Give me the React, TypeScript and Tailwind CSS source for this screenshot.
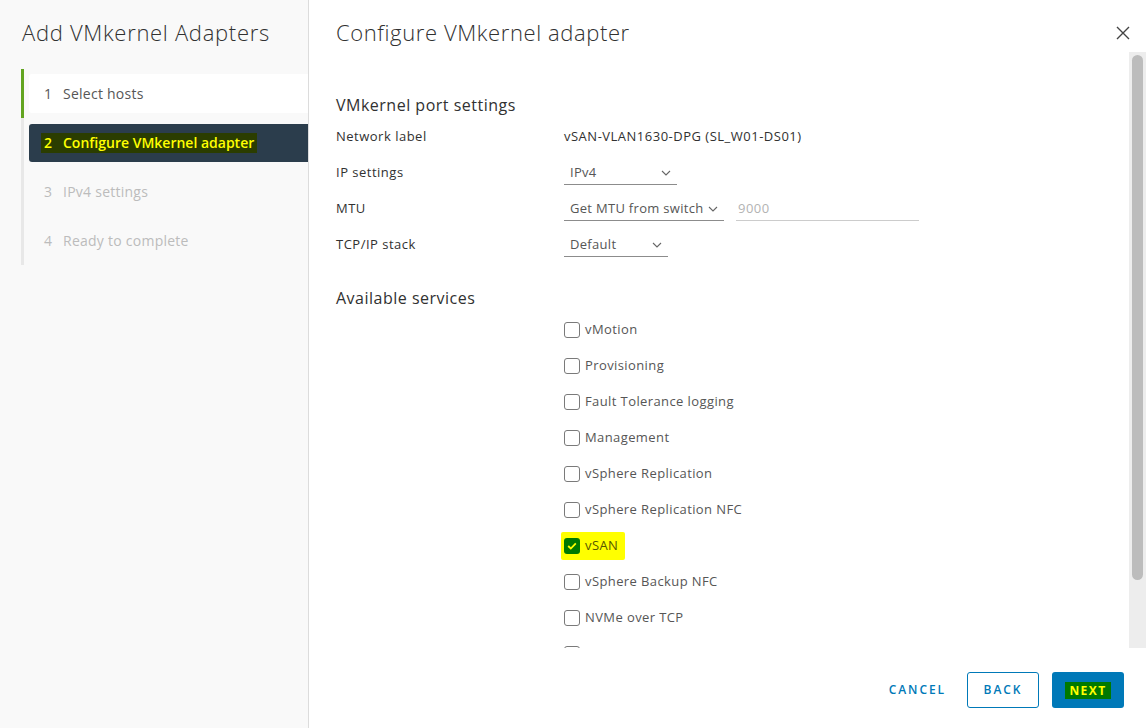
import React from "react";

const Chevron = () => (
  <svg width="10" height="6" viewBox="0 0 10 6" className="shrink-0">
    <path d="M1 1 L5 5 L9 1" fill="none" stroke="#666" strokeWidth="1.1" />
  </svg>
);

const Select = ({ value, width }: { value: string; width: string }) => (
  <div className={`${width} h-[24px] flex items-center justify-between gap-[4px] pl-[6px] pr-[6px] border-b border-[#8c8c8c] text-[13px] text-[#565656] tracking-[0.3px]`}>
    <span className="whitespace-nowrap">{value}</span>
    <Chevron />
  </div>
);

const services = [
  "vMotion",
  "Provisioning",
  "Fault Tolerance logging",
  "Management",
  "vSphere Replication",
  "vSphere Replication NFC",
  "vSAN",
  "vSphere Backup NFC",
  "NVMe over TCP",
  "",
];

export default function App() {
  return (
    <div
      className="w-[1148px] h-[728px] flex bg-white overflow-hidden"
      style={{ fontFamily: '"Open Sans", "Liberation Sans", sans-serif' }}
    >
      {/* Left panel */}
      <div className="w-[309px] shrink-0 bg-[#f9f9f9] border-r border-[#dcdcdc] flex flex-col">
        <div className="pl-[22px] pt-[17px] text-[22px] leading-[30px] font-light text-[#313131] tracking-[0.7px]">
          Add VMkernel Adapters
        </div>
        <div className="mt-[22px] ml-[21px] flex">
          <div className="w-[3px] flex flex-col">
            <div className="h-[49px] bg-[#62a420]" />
            <div className="h-[147px] bg-[#e8e8e8]" />
          </div>
          <div className="flex-1 flex flex-col pl-[5px] pt-[5px] tracking-[0.25px]">
            <div className="h-[39px] bg-white rounded-l-[3px] flex items-center pl-[15px] text-[14px] text-[#565656]">
              <span className="w-[19px]">1</span>
              <span>Select hosts</span>
            </div>
            <div className="mt-[11px] h-[38px] bg-[#2b3d4c] rounded-l-[3px] flex items-center pl-[12px]">
              <span className="bg-[#2b3d00] text-[#ffff00] font-semibold text-[14px] leading-[20px] px-[3px] tracking-normal">
                <span className="inline-block w-[19px]">2</span>Configure VMkernel adapter
              </span>
            </div>
            <div className="mt-[10px] h-[38px] flex items-center pl-[15px] text-[14px] text-[#bcbcbc]">
              <span className="w-[19px]">3</span>
              <span>IPv4 settings</span>
            </div>
            <div className="mt-[11px] h-[38px] flex items-center pl-[15px] text-[14px] text-[#bcbcbc]">
              <span className="w-[19px]">4</span>
              <span>Ready to complete</span>
            </div>
          </div>
        </div>
      </div>

      {/* Right panel */}
      <div className="flex-1 flex flex-col min-w-0">
        <div className="h-[52px] shrink-0 flex items-start justify-between pl-[27px] pr-[18px] pt-[17px]">
          <div className="text-[22px] leading-[30px] font-light text-[#313131] tracking-[0.6px]">
            Configure VMkernel adapter
          </div>
          <svg width="14" height="14" viewBox="0 0 14 14" className="mt-[9px]">
            <path d="M1 1 L13 13 M13 1 L1 13" stroke="#444" strokeWidth="1.4" fill="none" />
          </svg>
        </div>

        <div className="flex-1 flex min-h-0">
          <div className="flex-1 overflow-hidden pl-[27px]">
            <div className="mt-[41px] text-[16px] leading-[24px] text-[#313131] tracking-[0.5px]">VMkernel port settings</div>
            <div className="mt-[2px] text-[13px] text-[#313131] tracking-[0.5px]">
              <div className="h-[36px] flex items-center">
                <div className="w-[228px]">Network label</div>
                <div className="text-[#313131]">vSAN-VLAN1630-DPG (SL_W01-DS01)</div>
              </div>
              <div className="h-[36px] flex items-center">
                <div className="w-[228px]">IP settings</div>
                <Select value="IPv4" width="w-[113px]" />
              </div>
              <div className="h-[36px] flex items-center">
                <div className="w-[228px]">MTU</div>
                <Select value="Get MTU from switch" width="w-[160px]" />
                <div className="ml-[12px] w-[183px] h-[24px] flex items-center pl-[2px] border-b border-[#cccccc] text-[#b3b3b3]">
                  9000
                </div>
              </div>
              <div className="h-[36px] flex items-center">
                <div className="w-[228px]">TCP/IP stack</div>
                <Select value="Default" width="w-[104px]" />
              </div>
            </div>

            <div className="mt-[23px] text-[16px] leading-[24px] text-[#313131] tracking-[0.5px]">Available services</div>
            <div className="mt-[2px] pl-[228px] text-[13px] tracking-[0.4px]">
              {services.map((s, i) => {
                const on = s === "vSAN";
                return (
                  <div key={i} className="h-[36px] flex items-center">
                    {on ? (
                      <div className="ml-[-3px] flex items-center bg-[#ffff00] h-[28px] pl-[3px] pr-[7px] rounded-[2px]">
                        <div className="w-[16px] h-[16px] rounded-[3px] bg-[#007900] flex items-center justify-center">
                          <svg width="10" height="8" viewBox="0 0 10 8">
                            <path d="M1.2 4 L3.8 6.5 L8.8 1.3" stroke="#ffff00" strokeWidth="1.8" fill="none" />
                          </svg>
                        </div>
                        <span className="ml-[5px] text-[#565600]">{s}</span>
                      </div>
                    ) : (
                      <>
                        <div className="w-[16px] h-[16px] rounded-[3px] border border-[#7a7a7a] bg-white" />
                        {s && <span className="ml-[5px] text-[#565656]">{s}</span>}
                      </>
                    )}
                  </div>
                );
              })}
            </div>
          </div>
          {/* scrollbar */}
          <div className="w-[17px] mr-[2px] bg-[#ededed] flex justify-center pt-[3px]">
            <div className="w-[11px] h-[525px] rounded-full bg-[#bcbcbc]" />
          </div>
        </div>

        <div className="h-[80px] shrink-0 flex items-start justify-end pr-[24px] pt-[24px]">
          <button className="h-[36px] px-[12px] text-[12px] font-semibold tracking-[0.16em] text-[#0079b8]">
            CANCEL
          </button>
          <button className="ml-[9px] w-[72px] h-[36px] rounded-[3px] border border-[#0079b8] text-[12px] font-semibold tracking-[0.16em] text-[#0079b8]">
            BACK
          </button>
          <button className="ml-[13px] w-[72px] h-[36px] rounded-[3px] bg-[#0079b8] flex items-center justify-center">
            <span className="bg-[#007900] text-[#ffff00] text-[12px] font-bold tracking-[0.12em] px-[4px] leading-[17px]">
              NEXT
            </span>
          </button>
        </div>
      </div>
    </div>
  );
}
